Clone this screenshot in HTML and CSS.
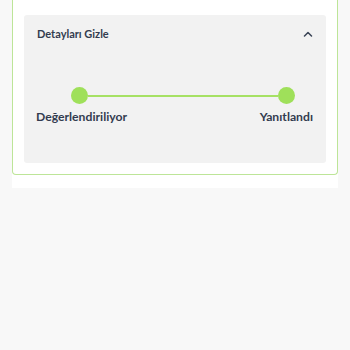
FILE: index.html
```html
<!DOCTYPE html>
<html lang="tr">
<head>
<meta charset="utf-8">
<link rel="stylesheet" href="styles.css">
</head>
<body>
<div class="shell">
  <div class="card">
    <div class="details">
      <div class="details-head">
        <span class="details-title">Detayları Gizle</span>
        <svg class="chevron" width="10" height="6" viewBox="0 0 10 6"><path d="M1.5 5 L5 1.5 L8.5 5" fill="none" stroke="#3a4456" stroke-width="1.5" stroke-linecap="round" stroke-linejoin="round"/></svg>
      </div>
      <div class="track">
        <span class="dot"></span>
        <span class="line"></span>
        <span class="dot"></span>
      </div>
      <div class="labels">
        <span class="label">Değerlendiriliyor</span>
        <span class="label">Yanıtlandı</span>
      </div>
    </div>
  </div>
</div>
</body>
</html>
```

FILE: styles.css
```css
html, body {
  margin: 0;
  padding: 0;
  background: #f8f8f8;
}
body {
  font-family: "Lato", "Inter", sans-serif;
  color: #323c4f;
}
.shell {
  margin: 0 12px;
  width: 326px;
  background: #ffffff;
  padding-bottom: 13px;
}
.card {
  border: 1px solid #bde598;
  border-top: none;
  border-radius: 0 0 4px 4px;
  padding: 15px 11px 11px 11px;
}
.details {
  background: #f2f2f2;
  border-radius: 3px;
  height: 148px;
  box-sizing: border-box;
  padding: 11px 12px 0 12px;
}
.details-head {
  display: flex;
  align-items: center;
  justify-content: space-between;
  height: 16px;
  padding-left: 1px;
  padding-right: 0;
}
.details-title {
  font-size: 11px;
  font-weight: 700;
  line-height: 16px;
}
.chevron {
  display: block;
  margin-right: 1px;
}
.track {
  display: flex;
  align-items: center;
  margin-top: 45px;
  padding-left: 35px;
  padding-right: 19px;
}
.dot {
  width: 17px;
  height: 17px;
  border-radius: 50%;
  background: #9fe05a;
  flex: none;
}
.line {
  flex: 1;
  height: 2px;
  background: #a6e164;
}
.labels {
  display: flex;
  justify-content: space-between;
  margin-top: 5px;
  padding-right: 1px;
}
.label {
  font-size: 12.2px;
  font-weight: 700;
  line-height: 16px;
}
```
